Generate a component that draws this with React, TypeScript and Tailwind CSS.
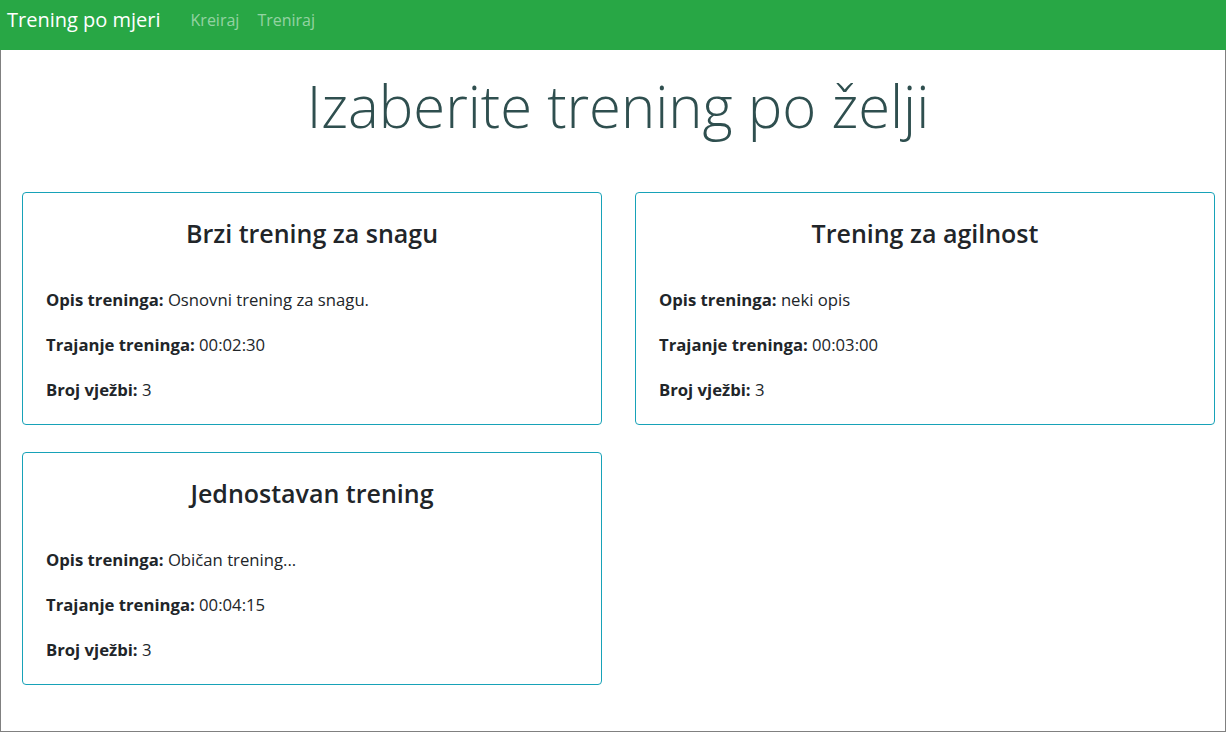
import React from 'react';

const trainings = [
  { name: 'Brzi trening za snagu', desc: 'Osnovni trening za snagu.', duration: '00:02:30', count: 3 },
  { name: 'Trening za agilnost', desc: 'neki opis', duration: '00:03:00', count: 3 },
  { name: 'Jednostavan trening', desc: 'Običan trening...', duration: '00:04:15', count: 3 },
];

function TrainingCard({ t }: { t: (typeof trainings)[number] }) {
  return (
    <div className="border border-[#17a2b8] rounded-[4px] px-[23px] pt-[23px] pb-[22px] flex flex-col">
      <h3 className="text-[25px] leading-[34px] font-semibold text-center text-[#212529] mb-[38px]">{t.name}</h3>
      <div className="flex flex-col gap-[21px] text-[16.7px] leading-[24px] text-[#212529]">
        <p><b className="font-bold">Opis treninga:</b> {t.desc}</p>
        <p><b className="font-bold">Trajanje treninga:</b> {t.duration}</p>
        <p><b className="font-bold">Broj vježbi:</b> {t.count}</p>
      </div>
    </div>
  );
}

export default function App() {
  return (
    <div className="w-[1226px] h-[732px] flex flex-col bg-white font-['Open_Sans',sans-serif]">
      <nav className="h-[50px] bg-[#28a745] flex items-start pt-[6px] px-[7px] shrink-0">
        <span className="text-[20px] leading-[28px] text-white mr-[30px]">Trening po mjeri</span>
        <div className="flex gap-[18px] pt-[2px] text-[16px] leading-[24px] text-white/50">
          <span>Kreiraj</span>
          <span>Treniraj</span>
        </div>
      </nav>
      <main className="flex-1 border-x border-b border-[#808080]">
        <h1 className="text-center text-[58px] leading-[72px] font-light text-[#2f4f4f] mt-[20px] mb-[50px] pl-[10px]">
          Izaberite trening po želji
        </h1>
        <div className="grid grid-cols-2 gap-y-[27px]">
          {trainings.map((t, i) => (
            <div key={i} className={i % 2 === 0 ? 'pl-[21px] pr-[11px]' : 'pl-[22px] pr-[10px]'}>
              <TrainingCard t={t} />
            </div>
          ))}
        </div>
      </main>
    </div>
  );
}
